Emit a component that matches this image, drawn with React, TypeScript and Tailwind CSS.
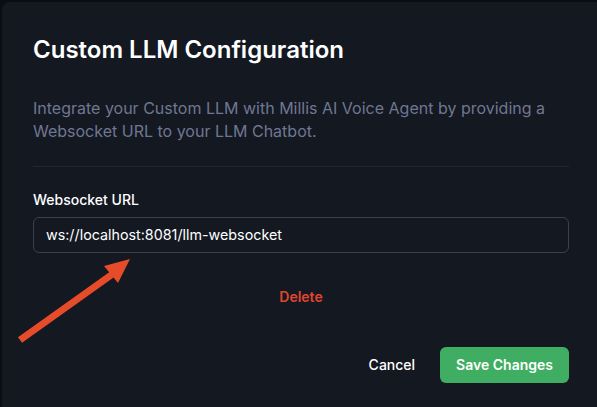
export default function App() {
  return (
    <div className="h-[407px] w-[597px] overflow-hidden bg-[#0b0d12] pl-[2px] pt-[2px] font-['Inter',sans-serif]">
      <div className="relative h-[420px] w-[610px] rounded-tl-lg bg-[#141821] pl-[31px] pr-[43px] pt-[32px]">
        <h2 className="text-[24px] font-semibold leading-[32px] text-white">Custom LLM Configuration</h2>
        <p className="mt-[31px] w-[536px] text-[16px] leading-[23px] text-[#6f7791]">
          Integrate your Custom LLM with Millis AI Voice Agent by providing a Websocket URL to your LLM Chatbot.
        </p>
        <div className="mt-[23px] h-px w-[536px] bg-[#222631]" />
        <label className="mt-[23px] block text-sm font-medium leading-5 text-white">Websocket URL</label>
        <div className="mt-[7px] flex h-[36px] w-[536px] items-center rounded-md border border-[#3a4050] px-[12px] text-[14.3px] text-white">
          ws://localhost:8081/llm-websocket
        </div>
        <div className="mt-[34px] flex w-[536px] justify-center">
          <button className="text-sm font-semibold text-[#e0452f]">Delete</button>
        </div>
        <div className="mt-[40px] flex w-[536px] items-center justify-end gap-[25px]">
          <button className="text-sm font-medium text-white">Cancel</button>
          <button className="h-[36px] rounded-md bg-[#3fae62] px-[16px] text-sm font-semibold text-white">
            Save Changes
          </button>
        </div>
        <svg className="absolute left-0 top-0" width="160" height="360" viewBox="0 0 160 360">
          <line x1="18" y1="338" x2="112" y2="271" stroke="#e64c29" strokeWidth="7" />
          <polygon points="128,257 102,264 116,281" fill="#e64c29" />
        </svg>
      </div>
    </div>
  )
}
